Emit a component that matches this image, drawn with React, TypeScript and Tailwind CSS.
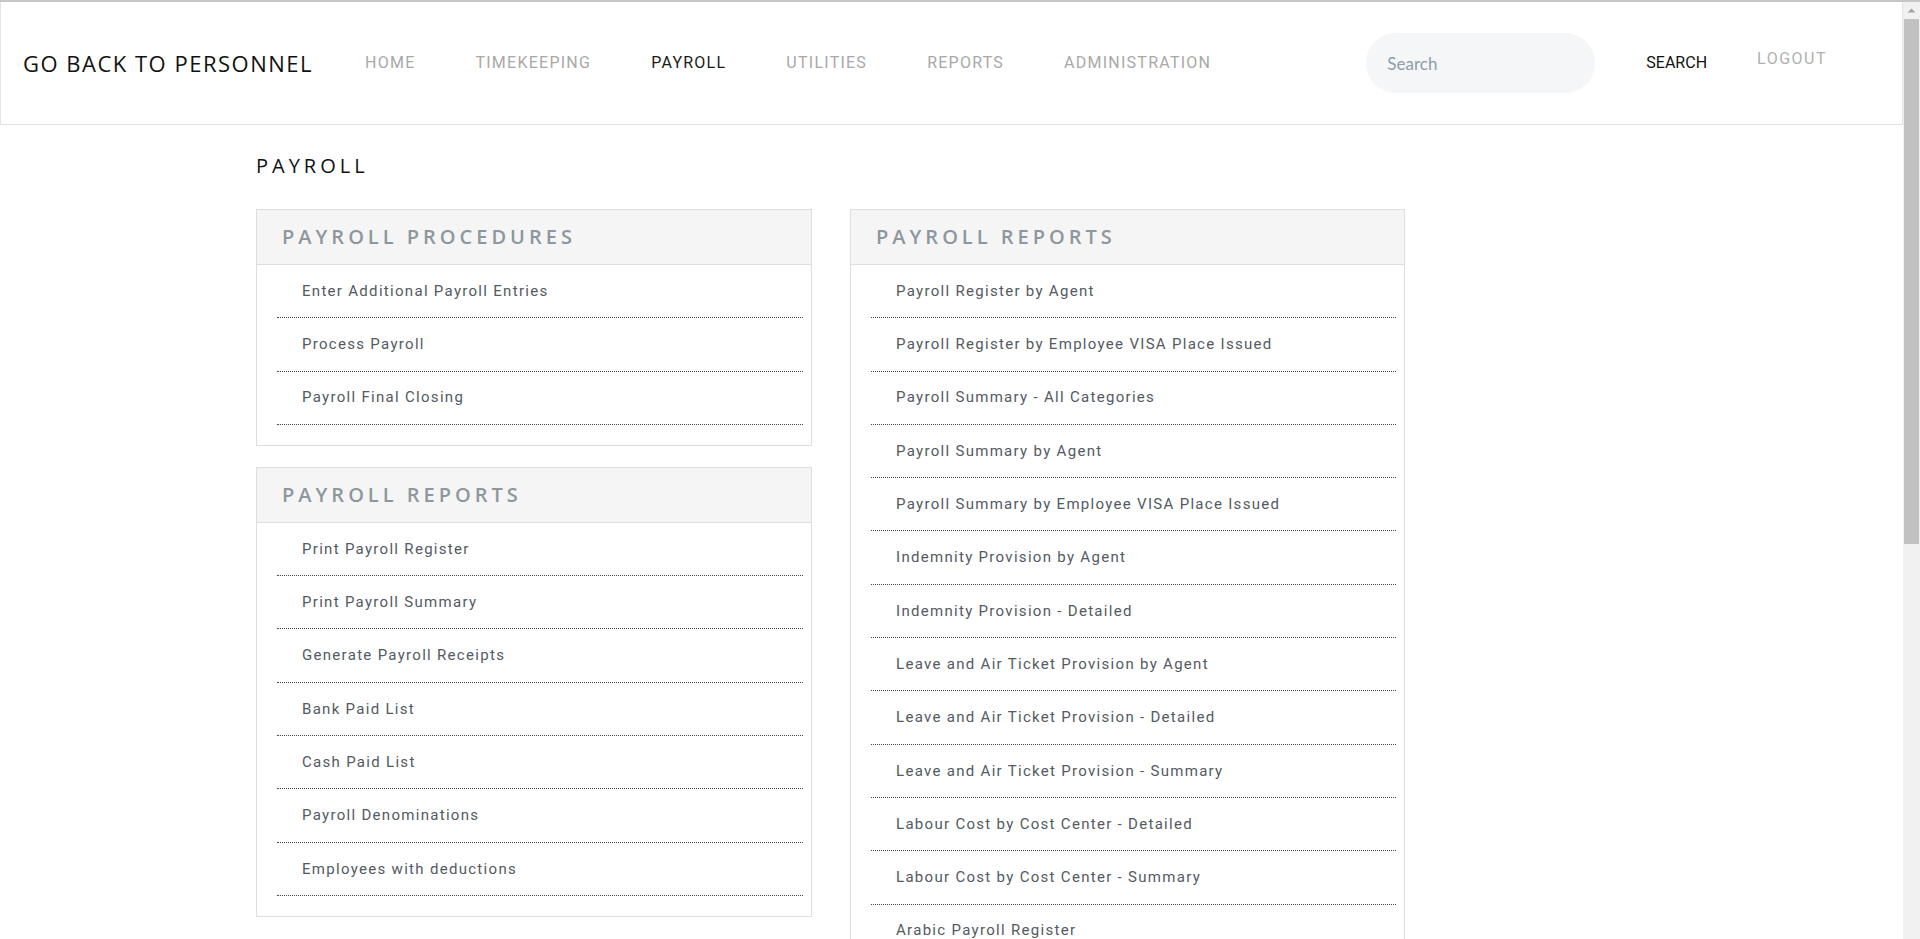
import React from 'react';

const procedures = [
  'Enter Additional Payroll Entries',
  'Process Payroll',
  'Payroll Final Closing',
];

const leftReports = [
  'Print Payroll Register',
  'Print Payroll Summary',
  'Generate Payroll Receipts',
  'Bank Paid List',
  'Cash Paid List',
  'Payroll Denominations',
  'Employees with deductions',
];

const rightReports = [
  'Payroll Register by Agent',
  'Payroll Register by Employee VISA Place Issued',
  'Payroll Summary - All Categories',
  'Payroll Summary by Agent',
  'Payroll Summary by Employee VISA Place Issued',
  'Indemnity Provision by Agent',
  'Indemnity Provision - Detailed',
  'Leave and Air Ticket Provision by Agent',
  'Leave and Air Ticket Provision - Detailed',
  'Leave and Air Ticket Provision - Summary',
  'Labour Cost by Cost Center - Detailed',
  'Labour Cost by Cost Center - Summary',
  'Arabic Payroll Register',
];

const navItems = ['HOME', 'TIMEKEEPING', 'PAYROLL', 'UTILITIES', 'REPORTS', 'ADMINISTRATION'];

function Panel({ title, items }: { title: string; items: string[] }) {
  return (
    <div className="border border-[#dedede] bg-white mb-[21px]">
      <div className="h-[55px] flex items-center pl-[25px] bg-[#f5f5f5] border-b border-[#dedede]">
        <h3 className="text-[20px] tracking-[4px] text-[#8d979d] font-['Open_Sans',sans-serif] font-semibold">
          {title}
        </h3>
      </div>
      <ul className="pl-[20px] pr-[8px] pb-[20px]">
        {items.map((item) => (
          <li
            key={item}
            className="h-[53.3px] flex items-center pl-[25px] border-b border-dotted border-[#444]"
          >
            <a className="text-[15px] tracking-[1.3px] text-[#535a62] cursor-pointer">{item}</a>
          </li>
        ))}
      </ul>
    </div>
  );
}

export default function App() {
  return (
    <div className="flex h-screen overflow-hidden bg-white font-[Roboto,sans-serif] border-t-2 border-[#c6c6c6]">
      <div className="w-[1903px] shrink-0">
        {/* top bar */}
        <header className="h-[123px] flex items-center border border-t-0 border-[#e3e3e3]">
          <a className="ml-[22px] text-[22px] tracking-[1.5px] text-[#111] font-['Open_Sans',sans-serif]">
            GO BACK TO PERSONNEL
          </a>
          <nav className="flex ml-[22px]">
            {navItems.map((n) => (
              <a
                key={n}
                className={
                  'px-[30px] text-[16px] tracking-[1.25px] ' +
                  (n === 'PAYROLL' ? 'text-[#1a1a1a]' : 'text-[#a8a8a8]')
                }
              >
                {n}
              </a>
            ))}
          </nav>
          <div className="ml-auto flex items-center">
            <input
              placeholder="Search"
              className="w-[229px] h-[60px] rounded-full bg-[#f5f6f8] pl-[21px] text-[17px] font-[Lato,sans-serif] placeholder:text-[#8e9dab] outline-none"
            />
            <button className="ml-[51px] text-[16px] text-[#111]">SEARCH</button>
            <a className="ml-[50px] mr-[75px] mb-[8px] text-[16px] tracking-[1.5px] text-[#b0b0b0]">LOGOUT</a>
          </div>
        </header>

        <main className="pl-[256px] pt-[26px]">
          <h2 className="text-[20px] tracking-[4px] text-[#111] font-['Open_Sans',sans-serif] mb-[28px]">
            PAYROLL
          </h2>
          <div className="flex gap-[38px] items-start">
            <div className="w-[556px]">
              <Panel title="PAYROLL PROCEDURES" items={procedures} />
              <Panel title="PAYROLL REPORTS" items={leftReports} />
            </div>
            <div className="w-[555px]">
              <Panel title="PAYROLL REPORTS" items={rightReports} />
            </div>
          </div>
        </main>
      </div>

      {/* page scrollbar */}
      <div className="w-[17px] shrink-0 bg-[#f1f1f1] flex flex-col items-center">
        <svg width="17" height="17" viewBox="0 0 17 17">
          <path d="M4.5 10.5 L8.5 6.5 L12.5 10.5 Z" fill="#a3a3a3" />
        </svg>
        <div className="w-[15px] h-[525px] bg-[#c1c1c1]" />
      </div>
    </div>
  );
}
